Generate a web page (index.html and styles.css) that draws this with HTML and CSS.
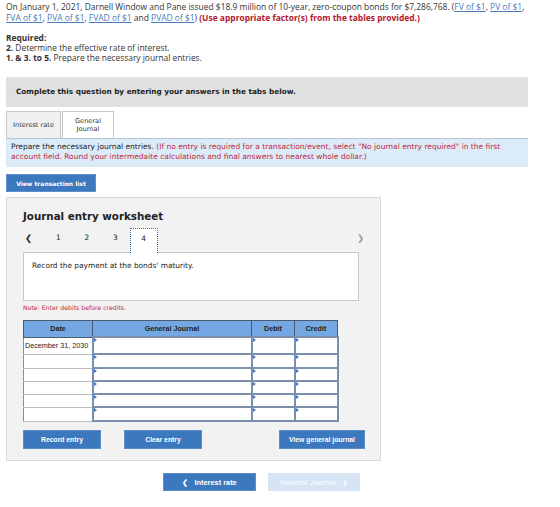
FILE: index.html
```html
<!DOCTYPE html>
<html lang="en">
<head>
  <meta charset="UTF-8" />
  <title>Journal entry worksheet</title>
  <link rel="stylesheet" href="styles.css">
</head>
<body>
  <div class="page">
    <!-- Question text -->
    <p class="intro">
      On January 1, 2021, Darnell Window and Pane issued $18.9 million of 10-year, zero-coupon bonds for $7,286,768. (<a href="#">FV of $1</a>, <a href="#">PV of $1</a>,
      <a href="#">FVA of $1</a>, <a href="#">PVA of $1</a>, <a href="#">FVAD of $1</a> and <a href="#">PVAD of $1</a>) <span class="warn">(Use appropriate factor(s) from the tables provided.)</span>
    </p>

    <div class="required">
      <strong>Required:</strong><br />
      <strong>2.</strong> Determine the effective rate of interest.<br />
      <strong>1. &amp; 3. to 5.</strong> Prepare the necessary journal entries.
    </div>

    <div class="banner">Complete this question by entering your answers in the tabs below.</div>

    <div class="tabs">
      <div class="tab">Interest rate</div>
      <div class="tab active">General<br />Journal</div>
    </div>

    <div class="instructions">
      Prepare the necessary journal entries. <span class="hint">(If no entry is required for a transaction/event, select "No journal entry required" in the first account field. Round your intermedaite calculations and final answers to nearest whole dollar.)</span>
    </div>

    <button class="btn btn-list">View transaction list</button>

    <!-- Worksheet panel -->
    <div class="worksheet">
      <h2>Journal entry worksheet</h2>

      <div class="pager">
        <span class="arrow prev">&#10094;</span>
        <span class="num">1</span>
        <span class="num">2</span>
        <span class="num">3</span>
        <span class="num current">4</span>
        <span class="arrow next">&#10095;</span>
      </div>

      <div class="desc">Record the payment at the bonds' maturity.</div>

      <p class="note">Note: Enter debits before credits.</p>

      <table class="journal">
        <thead>
          <tr>
            <th class="c-date">Date</th>
            <th class="c-acct">General Journal</th>
            <th class="c-amt">Debit</th>
            <th class="c-amt">Credit</th>
          </tr>
        </thead>
        <tbody>
          <tr class="r-first">
            <td class="date">December 31, 2030</td>
            <td class="inp"></td>
            <td class="inp"></td>
            <td class="inp"></td>
          </tr>
          <tr class="r-14">
            <td class="date"></td>
            <td class="inp"></td>
            <td class="inp"></td>
            <td class="inp"></td>
          </tr>
          <tr class="r-13">
            <td class="date"></td>
            <td class="inp"></td>
            <td class="inp"></td>
            <td class="inp"></td>
          </tr>
          <tr class="r-13">
            <td class="date"></td>
            <td class="inp"></td>
            <td class="inp"></td>
            <td class="inp"></td>
          </tr>
          <tr class="r-13">
            <td class="date"></td>
            <td class="inp"></td>
            <td class="inp"></td>
            <td class="inp"></td>
          </tr>
          <tr class="r-14">
            <td class="date"></td>
            <td class="inp"></td>
            <td class="inp"></td>
            <td class="inp"></td>
          </tr>
        </tbody>
      </table>

      <div class="actions">
        <button class="btn btn-action">Record entry</button>
        <button class="btn btn-action">Clear entry</button>
        <button class="btn btn-action btn-view">View general journal</button>
      </div>
    </div>

    <!-- Tab navigation -->
    <div class="bottom-nav">
      <button class="btn btn-nav">&#10094;&nbsp;&nbsp;&nbsp;Interest rate</button>
      <button class="btn btn-nav disabled">General Journal&nbsp;&nbsp;&nbsp;&#10095;</button>
    </div>
  </div>
</body>
</html>
```

FILE: styles.css
```css
/* ==============================================
   PAGE
   ============================================== */
body {
  margin: 0;
  background: #ffffff;
  color: #222;
}

.page {
  width: 522px;
  padding: 1px 6px 0;
}

/* ==============================================
   QUESTION TEXT
   ============================================== */
.intro {
  margin: 0;
  font-family: "Open Sans", sans-serif;
  font-size: 8.45px;
  line-height: 11px;
  color: #333;
}
.intro a {
  color: #4a7cc0;
  text-decoration: underline;
}
.warn {
  color: #b3172d;
  font-weight: bold;
}

.required {
  margin-top: 10px;
  font-family: "Open Sans", sans-serif;
  font-size: 8.4px;
  line-height: 10px;
  color: #333;
}

/* ==============================================
   BANNER + TABS
   ============================================== */
.banner {
  margin-top: 14px;
  height: 30px;
  line-height: 29px;
  padding-left: 10px;
  background: #e0e0e0;
  font-family: "DejaVu Sans", Verdana, sans-serif;
  font-size: 7.3px;
  font-weight: bold;
  color: #222;
}

.tabs {
  display: flex;
  margin-top: 4px;
  height: 27px;
  align-items: flex-end;
}
.tab {
  box-sizing: border-box;
  height: 27px;
  display: flex;
  align-items: center;
  justify-content: center;
  text-align: center;
  font-family: "DejaVu Sans", Verdana, sans-serif;
  font-size: 6.6px;
  line-height: 8px;
  color: #333;
  border: 1px solid #c8c8c8;
  border-bottom: none;
}
.tab:first-child {
  width: 55px;
  background: #f0f0f0;
}
.tab.active {
  width: 52px;
  background: #fff;
  margin-left: 1px;
}

.instructions {
  box-sizing: border-box;
  height: 29px;
  padding: 3px 6px 0 5px;
  background: #dcebf8;
  border-top: 1px solid #b8c4cf;
  font-family: "DejaVu Sans", Verdana, sans-serif;
  font-size: 7.5px;
  line-height: 10px;
  color: #222;
}
.hint {
  color: #c0283c;
}

/* ==============================================
   BUTTONS
   ============================================== */
.btn {
  display: inline-block;
  border: 1px solid #5d8fc9;
  background: #3b78bd;
  color: #fff;
  font-family: "Liberation Sans", Arial, sans-serif;
  font-weight: bold;
  font-size: 6.8px;
  padding: 0;
  cursor: pointer;
}
.btn-list {
  display: block;
  margin-top: 7px;
  width: 90px;
  height: 18px;
  font-family: "DejaVu Sans", Verdana, sans-serif;
  font-size: 6px;
}

/* ==============================================
   WORKSHEET PANEL
   ============================================== */
.worksheet {
  box-sizing: border-box;
  width: 375px;
  height: 264px;
  margin-top: 5px;
  padding: 0 0 0 16px;
  background: #f2f2f2;
  border: 1px solid #d9d9d9;
}
.worksheet h2 {
  margin: 11px 0 0;
  font-family: "DejaVu Sans", Verdana, sans-serif;
  font-size: 10.3px;
  line-height: 14px;
  color: #222;
}

.pager {
  display: flex;
  align-items: flex-end;
  width: 336px;
  height: 24px;
  margin-top: 5px;
  font-family: "DejaVu Sans", Verdana, sans-serif;
  font-size: 7.4px;
  color: #222;
}
.pager .num {
  box-sizing: border-box;
  width: 28.5px;
  height: 24px;
  line-height: 20px;
  text-align: center;
}
.pager .num.current {
  width: 28px;
  background: #fff;
  border: 1px dotted #3a6ea8;
  border-bottom: none;
  position: relative;
  z-index: 1;
  margin-bottom: -1px;
  height: 25px;
}
.pager .arrow {
  height: 24px;
  line-height: 20px;
}
.pager .prev {
  width: 21px;
  padding-left: 2px;
  box-sizing: border-box;
  font-size: 8.5px;
  font-weight: bold;
}
.pager .next {
  margin-left: auto;
  margin-right: -6px;
  width: 8px;
  color: #999;
  font-size: 8.5px;
  font-weight: bold;
}

.desc {
  box-sizing: border-box;
  width: 336px;
  height: 49px;
  padding: 8px 0 0 8px;
  background: #fff;
  border: 1px solid #c8c8c8;
  font-family: "DejaVu Sans", Verdana, sans-serif;
  font-size: 7.4px;
  color: #222;
}

.note {
  margin: 3px 0 0;
  font-family: "DejaVu Sans", Verdana, sans-serif;
  font-size: 6.2px;
  line-height: 8px;
  color: #c0283c;
}

/* ==============================================
   JOURNAL TABLE
   ============================================== */
.journal {
  margin-top: 8px;
  width: 311px;
  border-collapse: collapse;
  table-layout: fixed;
  font-family: "Liberation Sans", Arial, sans-serif;
  font-size: 7.2px;
}
.journal th {
  height: 15px;
  padding: 0;
  background: #74a8e2;
  border: 1px solid #4b5a6e;
  color: #222;
  font-weight: bold;
}
.journal .c-date { width: 68px; }
.journal .c-acct { width: 158px; }
.journal .c-amt { width: 42px; }

.journal td {
  padding: 0;
  background: #fff;
}
.journal td.date {
  border: 1px solid #bdbdbd;
  border-left-color: #8c8c8c;
  padding-left: 1px;
  color: #222;
  white-space: nowrap;
  overflow: hidden;
}
.journal td.inp {
  position: relative;
  border: 2px solid #7b8fac;
}
/* small blue marker in the corner of each input cell */
.journal td.inp::before {
  content: "";
  position: absolute;
  top: 0;
  left: 0;
  border-top: 2px solid transparent;
  border-bottom: 2px solid transparent;
  border-left: 3px solid #3b78d0;
}
.journal tr.r-first td { height: 15px; }
.journal tr.r-14 td { height: 12px; }
.journal tr.r-13 td { height: 11px; }

.actions {
  display: flex;
  width: 342px;
  margin-top: 8px;
}
.btn-action {
  width: 78px;
  height: 19px;
  margin-right: 23px;
}
.btn-view {
  width: 86px;
  margin-left: auto;
  margin-right: 0;
}

/* ==============================================
   BOTTOM NAV
   ============================================== */
.bottom-nav {
  display: flex;
  margin-top: 12px;
  padding-left: 157px;
  gap: 12px;
}
.btn-nav {
  width: 93px;
  height: 18px;
  font-size: 7.4px;
}
.btn-nav.disabled {
  width: 92px;
  background: #d6e4f4;
  border-color: #d6e4f4;
  color: #f4f8fc;
}
```
